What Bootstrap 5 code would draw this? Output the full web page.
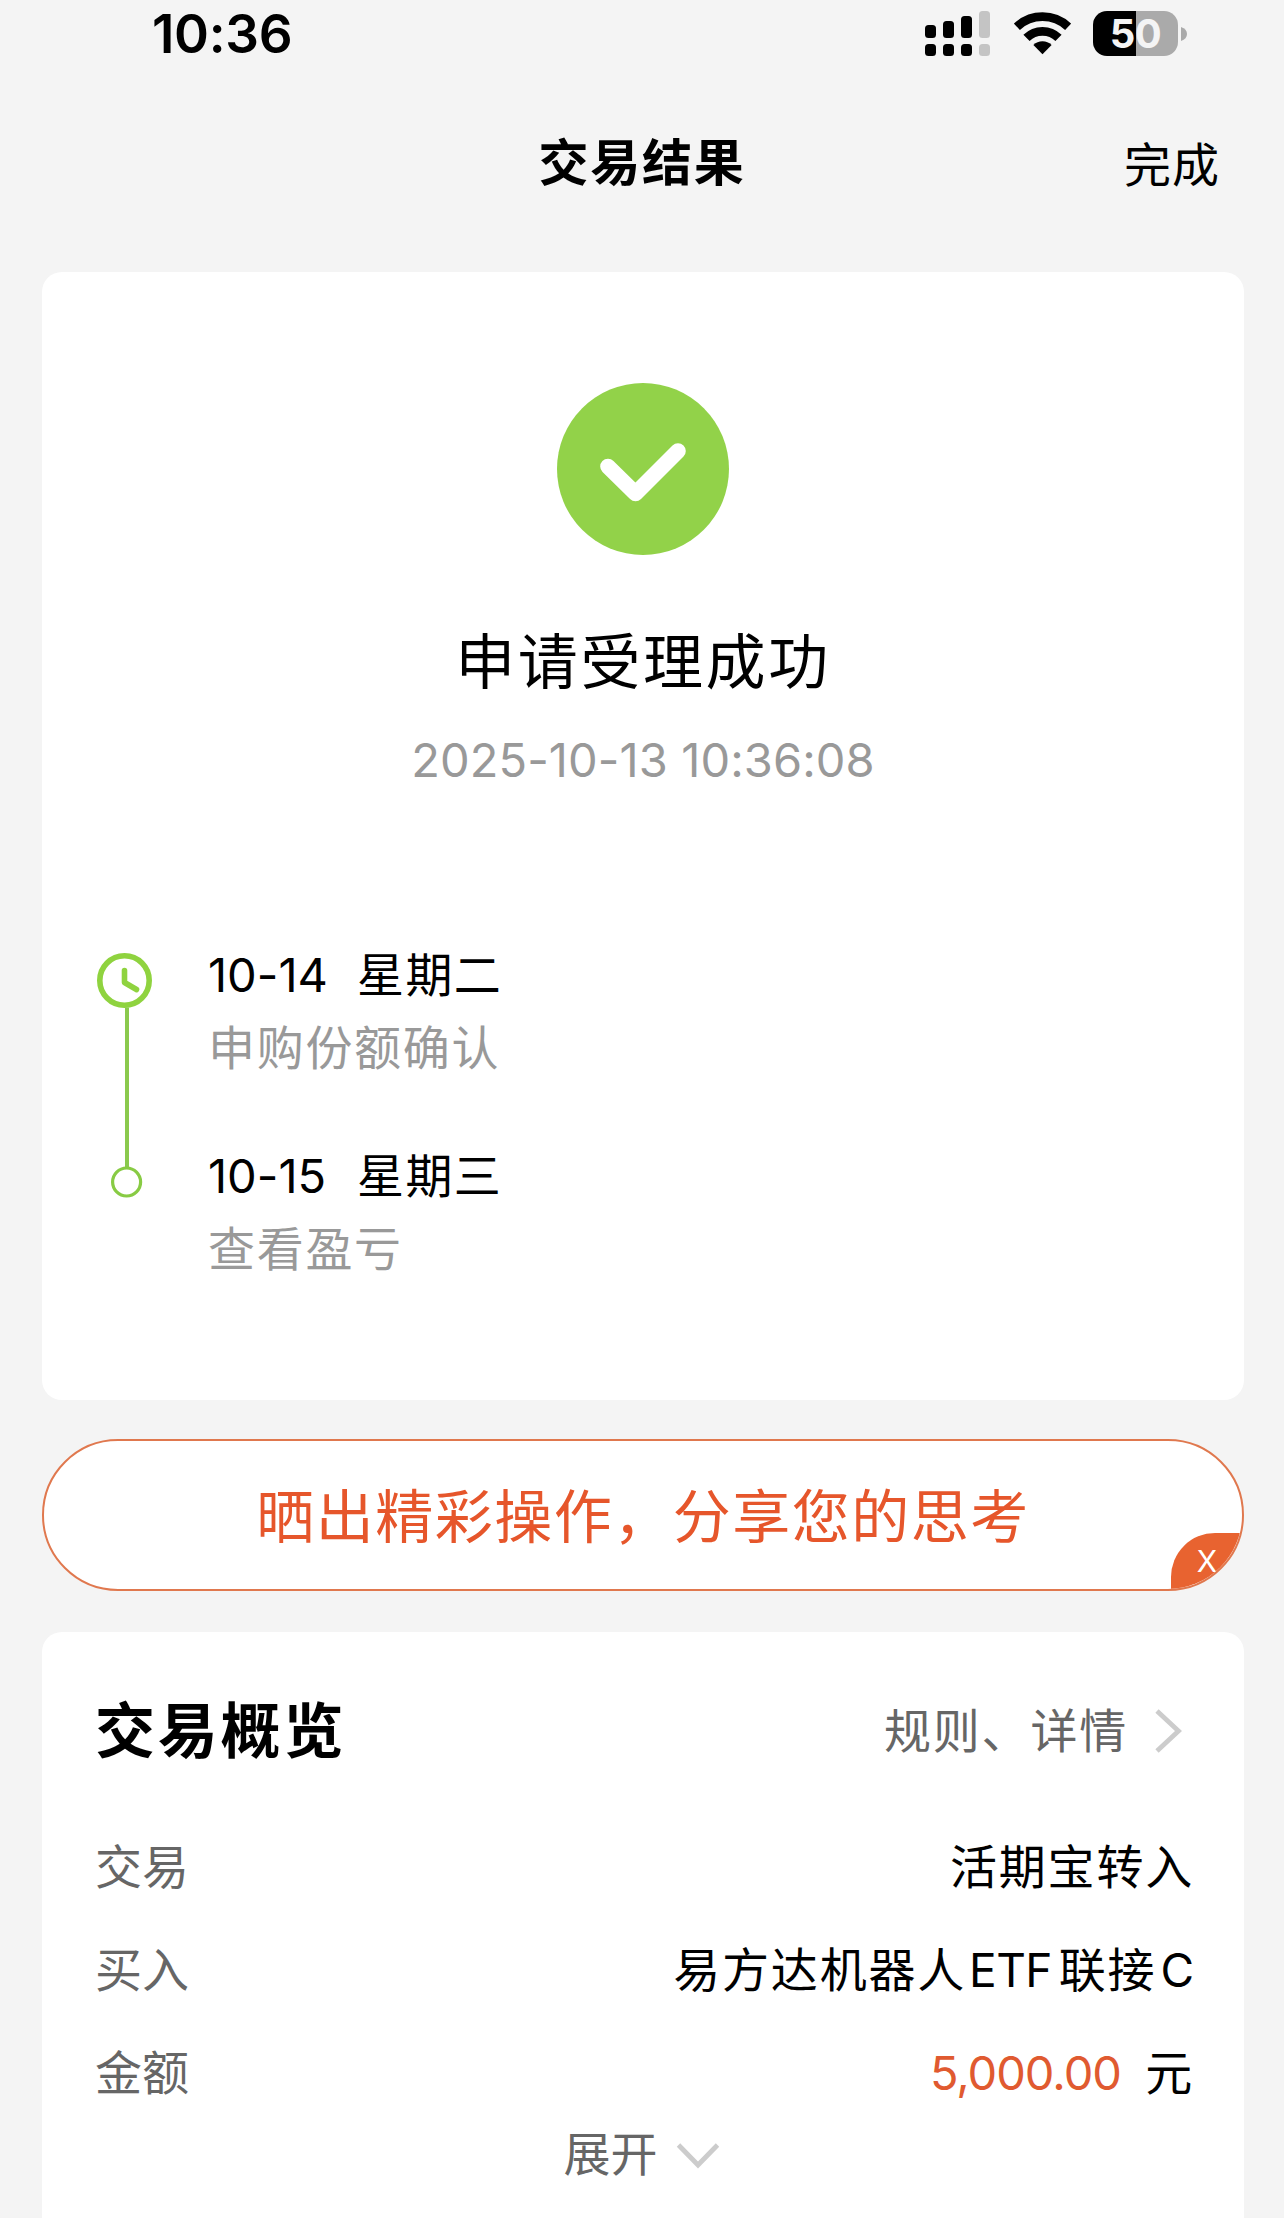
<!DOCTYPE html>
<html lang="zh-CN">
<head>
<meta charset="utf-8">
<meta name="viewport" content="width=device-width, initial-scale=1">
<title>交易结果</title>
<link href="https://cdn.jsdelivr.net/npm/bootstrap@5.3.0/dist/css/bootstrap.min.css" rel="stylesheet">
<style>
body{background:#f4f4f4;color:#000;font-family:Inter,"Noto Sans CJK SC",sans-serif;font-size:47px;line-height:60px;font-feature-settings:"calt" 0;overflow:hidden}
.screen{width:1284px;height:2218px;overflow:hidden}
.status{height:66px;padding:1px 97px 0 152px}
.clock{font-size:53px;font-weight:600;letter-spacing:-.3px}
.wifi{margin:0 22px 0 24px}
.batt{width:85px;height:45px;border-radius:14px;background:linear-gradient(90deg,#000 43px,#aaa 43px);color:#f4f4f4;font-size:40px;font-weight:700;line-height:45px;letter-spacing:-.6px}
.nub{margin-left:3px}
.topbar{height:187px;padding:6px 64px 0 64px}
.page-title{font-size:50px;font-weight:700;letter-spacing:1.8px;line-height:60px}
.done{letter-spacing:1px;padding-top:4px}
.panel{background:#fff;border-radius:20px;margin:0 40px 0 42px}
.result{height:1128px;margin-top:19px;padding-top:111px}
.result-title{font-size:60px;letter-spacing:2.6px;line-height:80px;margin-top:67px}
.stamp{color:#999;line-height:48px;margin-top:34px;letter-spacing:.1px}
.steps{margin-top:161px;padding-left:55px}
.rail{margin-top:8px}
.step-list{margin-left:55px}
.step-sub{color:#999;margin-top:13px;letter-spacing:1.7px}
.step-next{margin-top:68px}
.step-date{display:inline-block;width:149px}
.day{letter-spacing:1.4px}
.pill{height:152px;margin:39px 40px 41px 42px;padding-top:4px;border:2px solid #e0784e;border-radius:76px;background:#fff;color:#e6562b;font-size:58px;letter-spacing:1.5px;overflow:hidden}
.pill-close{right:-2px;bottom:-2px;width:73px;height:58px;background:#e86330;color:#fff;border-radius:44px 0 0 0;font-size:30px;line-height:57px;letter-spacing:0;padding-right:1px}
.overview{height:700px;border-radius:20px 20px 0 0;padding:0 50px 0 53px}
.overview-head{height:183px;padding-top:15px}
.overview-title{font-size:60px;font-weight:700;letter-spacing:2.8px;line-height:80px}
.muted{color:#666}
.go{margin:0 12px 0 26px}
.line{height:103px}
.wide{letter-spacing:1.8px}
.etf{font-size:46px;letter-spacing:-.6px;margin:0 7px 0 3px}
.share{font-size:46px;letter-spacing:0;margin-left:4px}
.amount{color:#e05a30;letter-spacing:-1px;margin-right:11px}
.more{padding-right:6px}
.more svg{margin:3px 0 0 18px}
</style>
</head>
<body>
<main class="screen">
  <div class="status d-flex justify-content-between align-items-center">
    <span class="clock">10:36</span>
    <div class="d-flex align-items-center">
      <svg width="65" height="45" viewBox="0 0 65 45"><g><rect y="14" width="11" height="13" rx="3.5"/><rect x="18" y="10" width="11" height="17" rx="3.5"/><rect x="36" y="5" width="11" height="22" rx="3.5"/><rect y="33" width="11" height="12" rx="3.5"/><rect x="18" y="33" width="11" height="12" rx="3.5"/><rect x="36" y="33" width="11" height="12" rx="3.5"/></g><g fill="#c4c4c4"><rect x="54" width="11" height="27" rx="3.5"/><rect x="54" y="33" width="11" height="12" rx="3.5"/></g></svg>
      <svg class="wifi" width="57" height="43" viewBox="0 0 57 43"><g fill="none" stroke="#000" stroke-width="8.8"><path d="M2.9 14.8A37.5 37.5 0 0 1 54.1 14.8"/><path d="M12.5 25.9A22.7 22.7 0 0 1 44.5 25.9"/></g><path d="M28.5 42.3L19.4 32.9A13.3 13.3 0 0 1 37.6 32.9Z"/></svg>
      <div class="batt text-center">50</div>
      <svg class="nub" width="6" height="14" viewBox="0 0 6 14"><path d="M0 0Q6 2 6 7T0 14Z" fill="#aaa"/></svg>
    </div>
  </div>

  <header class="topbar d-flex align-items-center">
    <span class="col-3"></span>
    <h1 class="page-title col-6 text-center m-0">交易结果</h1>
    <span class="done col-3 text-end">完成</span>
  </header>

  <section class="panel result">
    <svg class="d-block mx-auto" width="172" height="172" viewBox="0 0 172 172"><circle cx="86" cy="86" r="86" fill="#92d249"/><path d="M51 83.5L78.5 110.5L121 68" fill="none" stroke="#fff" stroke-width="15.6" stroke-linecap="round" stroke-linejoin="round"/></svg>
    <h2 class="result-title text-center mb-0 fw-normal">申请受理成功</h2>
    <div class="stamp text-center">2025-10-13 10:36:08</div>
    <div class="steps d-flex align-items-start">
      <svg class="rail" width="56" height="248" viewBox="0 0 56 248" fill="none"><circle cx="27.5" cy="27.5" r="24.7" stroke="#8fd33f" stroke-width="5.6"/><path d="M27.5 17.5V29.5L39.5 36.5" stroke="#8fd33f" stroke-width="5.6" stroke-linecap="round" stroke-linejoin="round"/><path d="M30 54.5V215" stroke="#8ac94d" stroke-width="4"/><circle cx="29.6" cy="229" r="14" stroke="#88cb44" stroke-width="3.2"/></svg>
      <div class="step-list">
        <div><span class="step-date">10-14</span><span class="day">星期二</span></div>
        <div class="step-sub">申购份额确认</div>
        <div class="step-next"><span class="step-date">10-15</span><span class="day">星期三</span></div>
        <div class="step-sub">查看盈亏</div>
      </div>
    </div>
  </section>

  <div class="pill position-relative d-flex align-items-center justify-content-center">
    <span>晒出精彩操作，分享您的思考</span>
    <span class="pill-close position-absolute text-center">X</span>
  </div>

  <section class="panel overview">
    <div class="overview-head d-flex justify-content-between align-items-center">
      <h2 class="overview-title m-0">交易概览</h2>
      <div class="d-flex align-items-center muted wide">规则、详情<svg class="go" width="28" height="46" viewBox="0 0 28 46"><path d="M3 3L24.5 23L3 43" fill="none" stroke="#ccc" stroke-width="4.8"/></svg></div>
    </div>
    <div class="line d-flex justify-content-between align-items-center"><span class="muted">交易</span><span class="wide">活期宝转入</span></div>
    <div class="line d-flex justify-content-between align-items-center"><span class="muted">买入</span><span class="wide">易方达机器人<span class="etf">ETF</span>联接<span class="share">C</span></span></div>
    <div class="line d-flex justify-content-between align-items-center"><span class="muted">金额</span><span><span class="amount">5,000.00</span> <span class="wide">元</span></span></div>
    <div class="more d-flex justify-content-center align-items-center muted">展开<svg width="44" height="28" viewBox="0 0 44 28"><path d="M2.5 3L22 23L41.5 3" fill="none" stroke="#ccc" stroke-width="4.8"/></svg></div>
  </section>
</main>
<script src="https://cdn.jsdelivr.net/npm/bootstrap@5.3.0/dist/js/bootstrap.bundle.min.js"></script>
</body>
</html>
